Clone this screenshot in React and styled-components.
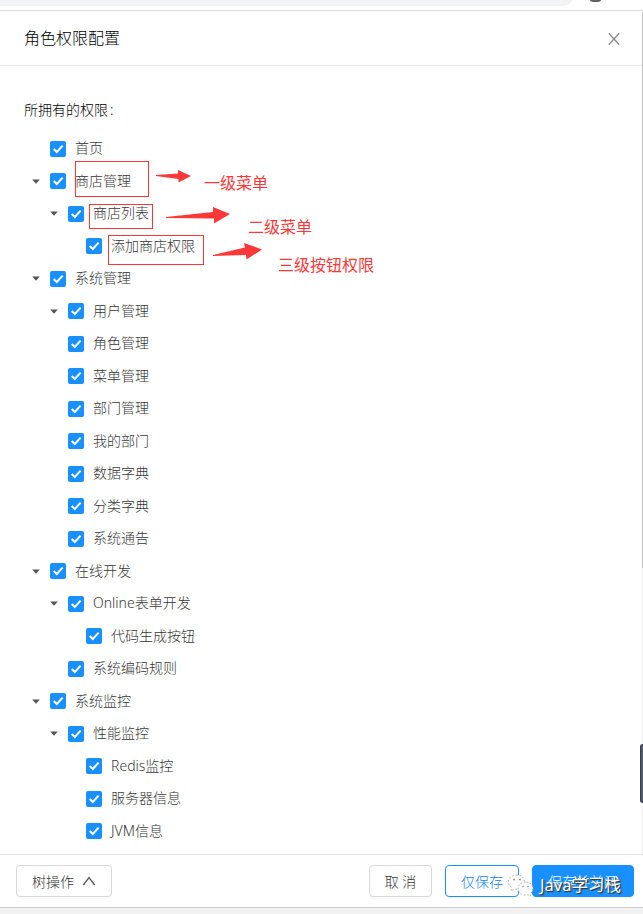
import styled, { createGlobalStyle } from "styled-components";

const GlobalStyle = createGlobalStyle`
  * {
    box-sizing: border-box;
  }
  body {
    margin: 0;
    background: #fff;
    font-family: "Noto Sans", "Noto Sans CJK SC", sans-serif;
    font-size: 14px;
    font-weight: 300;
    overflow: hidden;
  }
`;

const Page = styled.div`
  position: relative;
  width: 643px;
  height: 914px;
  display: flex;
  flex-direction: column;
  overflow: hidden;
  background: #fff;
`;

const BrowserBar = styled.div`
  display: flex;
  align-items: flex-start;
  gap: 18px;
  flex: none;
  height: 11px;
  border-bottom: 1px solid #d8dadc;
`;

const AddressBar = styled.div`
  width: 572px;
  height: 6px;
  background: #f1f3f4;
  border-bottom-right-radius: 10px 6px;
`;

const BarDot = styled.div`
  width: 11px;
  height: 2px;
  background: #5f6368;
  border-radius: 0 0 5px 5px / 0 0 2px 2px;
`;

const Header = styled.header`
  display: flex;
  align-items: center;
  justify-content: space-between;
  flex: none;
  height: 55px;
  padding: 0 23px 0 24px;
  border-bottom: 1px solid #e6e6e6;
`;

const Title = styled.h1`
  margin: 0;
  font-size: 16px;
  line-height: 22px;
  font-weight: 300;
  color: #000;
`;

const CloseIcon = styled.svg`
  width: 12px;
  height: 12px;
  margin-top: 2px;
  stroke: #8a8a8a;
  stroke-width: 1.4;
  fill: none;
`;

const Body = styled.main`
  flex: none;
  height: 788px;
  padding: 33px 24px 0;
`;

const Label = styled.div`
  height: 22px;
  line-height: 22px;
  color: #000;
`;

const Colon = styled.span`
  margin-left: 2px;
`;

const Tree = styled.ul`
  list-style: none;
  margin: 0;
  padding: 11.5px 0 0 3px;
`;

const TreeRow = styled.li`
  display: flex;
  align-items: center;
  height: 32.5px;
  padding-left: ${({ $level }) => $level * 18}px;
`;

const Switcher = styled.span`
  display: flex;
  justify-content: center;
  width: 18px;
  margin-right: 5px;
  visibility: ${({ $open }) => ($open ? "visible" : "hidden")};
`;

const Checkbox = styled.span`
  display: flex;
  width: 16px;
  height: 16px;
  margin-right: 9px;
  border-radius: 2px;
  background: #1890ff;
`;

const NodeTitle = styled.span`
  line-height: 22px;
  margin-top: -1px;
  color: #363636;
  white-space: nowrap;
`;

const Footer = styled.footer`
  display: flex;
  align-items: center;
  flex: none;
  height: 54px;
  padding: 0 9px 0 16px;
  border-top: 1px solid #e4e4e4;
  border-bottom: 1px solid #d0d0d0;
`;

const colors = {
  default: ["#d9d9d9", "#fff", "#363636"],
  ghost: ["#1890ff", "#fff", "#1080f8"],
  primary: ["#1890ff", "#1890ff", "#fff"],
};

const Button = styled.button`
  display: flex;
  align-items: center;
  justify-content: center;
  gap: 8px;
  width: ${({ $width }) => $width}px;
  height: 32px;
  margin: 0 0 1px;
  padding: 0;
  font: inherit;
  border: 1px solid ${({ $kind }) => colors[$kind][0]};
  border-radius: 4px;
  background: ${({ $kind }) => colors[$kind][1]};
  color: ${({ $kind }) => colors[$kind][2]};
  box-shadow: 0 2px 0 rgba(0, 0, 0, 0.02);
  white-space: pre;
`;

const Actions = styled.div`
  display: flex;
  gap: 13px;
  margin-left: auto;
`;

const BottomStrip = styled.div`
  flex: 1;
  background: #f2f2f2;
`;

// things lying over the drawer
const Frame = styled.div`
  position: absolute;
  left: ${({ $x }) => $x}px;
  top: ${({ $y }) => $y}px;
  width: ${({ $w }) => $w}px;
  height: ${({ $h }) => $h}px;
  border: 1px solid #fb3838;
`;

const Note = styled.span`
  position: absolute;
  left: ${({ $x }) => $x}px;
  top: ${({ $y }) => $y}px;
  font-size: 16px;
  line-height: 24px;
  font-weight: 400;
  color: #fb3838;
  white-space: nowrap;
`;

const Arrows = styled.svg`
  position: absolute;
  left: 150px;
  top: 165px;
  width: 120px;
  height: 100px;
  fill: #fb3838;
`;

const ScrollEdge = styled.div`
  position: absolute;
  right: 0;
  top: 12px;
  width: 1px;
  height: 842px;
  background: linear-gradient(#c4c4c4 556px, #f0f0f0 556px);
`;

const SideHandle = styled.div`
  position: absolute;
  right: 0;
  top: 744px;
  width: 3px;
  height: 59px;
  border: 1px solid #3a3f49;
  border-right: 0;
  border-radius: 3px 0 0 3px;
  background: #505b66;
`;

const Watermark = styled.div`
  position: absolute;
  left: 507px;
  top: 872px;
  display: flex;
  align-items: center;
  gap: 6px;
  font-size: 16.5px;
  line-height: 26px;
  font-weight: 400;
  color: #fff;
  white-space: nowrap;
  text-shadow: 1px 1px 1px #333, 1px 1px 1px #555;
`;

const nodes = [
  { title: "首页", level: 0 },
  { title: "商店管理", level: 0, open: true },
  { title: "商店列表", level: 1, open: true },
  { title: "添加商店权限", level: 2 },
  { title: "系统管理", level: 0, open: true },
  { title: "用户管理", level: 1, open: true },
  { title: "角色管理", level: 1 },
  { title: "菜单管理", level: 1 },
  { title: "部门管理", level: 1 },
  { title: "我的部门", level: 1 },
  { title: "数据字典", level: 1 },
  { title: "分类字典", level: 1 },
  { title: "系统通告", level: 1 },
  { title: "在线开发", level: 0, open: true },
  { title: "Online表单开发", level: 1, open: true },
  { title: "代码生成按钮", level: 2 },
  { title: "系统编码规则", level: 1 },
  { title: "系统监控", level: 0, open: true },
  { title: "性能监控", level: 1, open: true },
  { title: "Redis监控", level: 2 },
  { title: "服务器信息", level: 2 },
  { title: "JVM信息", level: 2 },
];

const WechatIcon = () => (
  <svg width="27" height="24" viewBox="0 0 27 24">
    <g fill="#fff" stroke="#999" strokeWidth="0.8" strokeDasharray="1.6 1.8">
      <path d="M10 2C5 2 1.500 5 1.500 9c0 2.400 1.200 4.200 3.200 5.500L4 18l3.500-2c5 1 10-2 10-7 0-4-3-7-7.500-7z" />
      <path d="M18.500 9c-4.500 0-7.500 3-7.500 6.500s3 6.500 7.500 6.500l2-.3 3 1.300-.5-2.200c1.800-1.300 3-3 3-5.300 0-3.500-3-6.500-7.500-6.500z" />
    </g>
    <g fill="#888">
      <circle cx="7" cy="6.500" r="0.900" />
      <circle cx="13" cy="6.500" r="0.900" />
      <circle cx="16" cy="13.500" r="0.800" />
      <circle cx="21" cy="13.500" r="0.800" />
    </g>
  </svg>
);

const App = () => {
  return (
    <Page>
      <GlobalStyle />
      <BrowserBar>
        <AddressBar />
        <BarDot />
      </BrowserBar>

      <Header>
        <Title>角色权限配置</Title>
        <CloseIcon viewBox="0 0 12 12">
          <path d="M0.800 0.300L11.200 11.700M11.200 0.300L0.800 11.700" />
        </CloseIcon>
      </Header>

      <Body>
        <Label>
          所拥有的权限<Colon>:</Colon>
        </Label>
        <Tree>
          {nodes.map((node) => (
            <TreeRow key={node.title} $level={node.level}>
              <Switcher $open={node.open}>
                <svg width="8" height="5" viewBox="0 0 8 5">
                  <path d="M0.200 0.500h7.600L4 4.700z" fill="#555" />
                </svg>
              </Switcher>
              <Checkbox>
                <svg width="16" height="16" viewBox="0 0 16 16">
                  <path
                    d="M3.700 8L6.800 11L12.600 4.600"
                    fill="none"
                    stroke="#fff"
                    strokeWidth="2"
                  />
                </svg>
              </Checkbox>
              <NodeTitle>{node.title}</NodeTitle>
            </TreeRow>
          ))}
        </Tree>
      </Body>

      <Footer>
        <Button $kind="default" $width={96}>
          树操作
          <svg width="14" height="10" viewBox="0 0 14 10">
            <path
              d="M1.300 9L7 1.500L12.700 9"
              fill="none"
              stroke="#555"
              strokeWidth="1.300"
            />
          </svg>
        </Button>
        <Actions>
          <Button $kind="default" $width={63}>
            取 消
          </Button>
          <Button $kind="ghost" $width={74}>
            仅保存
          </Button>
          <Button $kind="primary" $width={102}>
            保存并关闭
          </Button>
        </Actions>
      </Footer>
      <BottomStrip />

      <Frame $x={75} $y={161} $w={74} $h={36} />
      <Frame $x={89} $y={204} $w={64} $h={25} />
      <Frame $x={108} $y={235} $w={96} $h={30} />
      <Arrows viewBox="150 165 120 100">
        <path d="M156 175l22-1.500V170l13 6-12.500 6.500V179L156 176z" />
        <path d="M166 217l47-5v-5l17 7-16 9.500V218.500L166 218z" />
        <path d="M213 255l32-7.500L244 243l18 6.500-15.500 10-.5-4.500L213 256z" />
      </Arrows>
      <Note $x={204} $y={171}>
        一级菜单
      </Note>
      <Note $x={248} $y={215}>
        二级菜单
      </Note>
      <Note $x={278} $y={253}>
        三级按钮权限
      </Note>

      <ScrollEdge />
      <SideHandle />
      <Watermark>
        <WechatIcon />
        Java学习栈
      </Watermark>
    </Page>
  );
};

export default App;
